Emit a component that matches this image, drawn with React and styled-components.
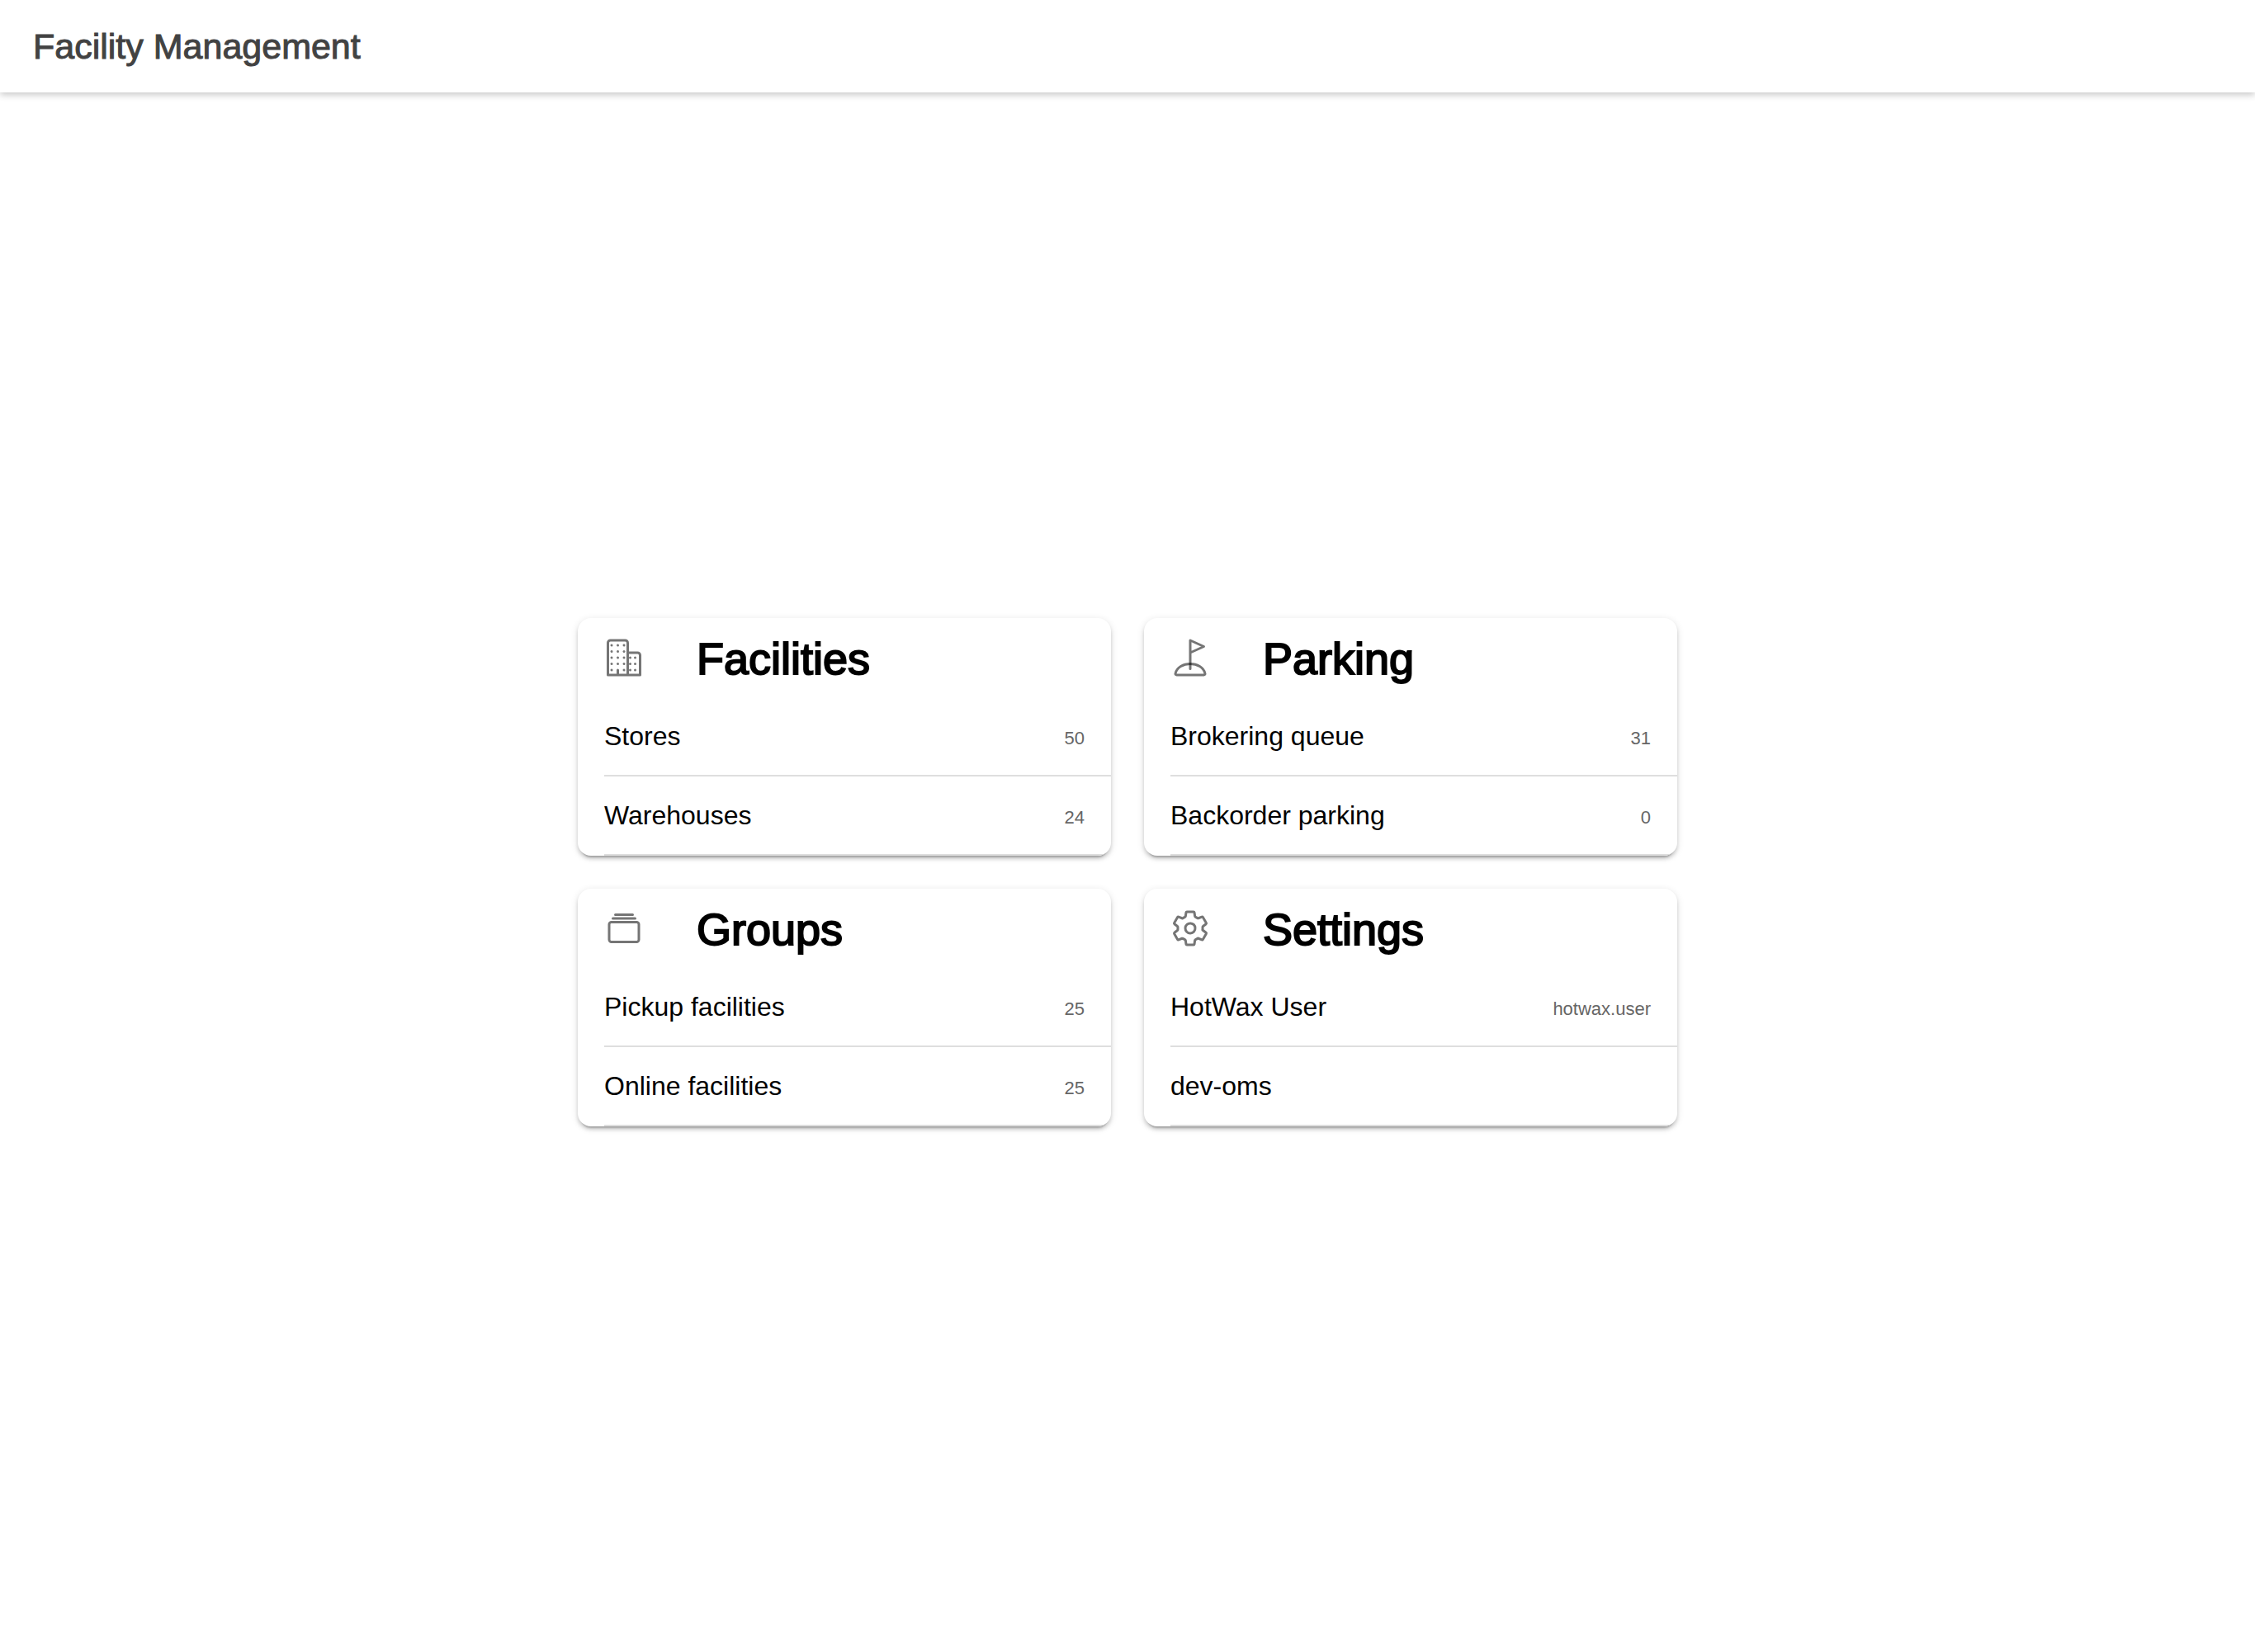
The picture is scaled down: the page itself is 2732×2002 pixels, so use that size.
import React from "react";
import styled, { createGlobalStyle } from "styled-components";
import {
  IoAlbumsOutline,
  IoBusinessOutline,
  IoGolfOutline,
  IoSettingsOutline,
} from "react-icons/io5";

const GlobalStyle = createGlobalStyle`
  *, *::before, *::after { box-sizing: border-box; }
  body {
    margin: 0;
    background: #fff;
    color: #000;
    font-family: "Helvetica Neue", "Liberation Sans", Arial, sans-serif;
  }
`;

const Page = styled.div`
  display: flex;
  flex-direction: column;
  min-height: 100vh;
`;

const Header = styled.header`
  display: flex;
  align-items: center;
  height: 112px;
  padding: 0 40px;
  box-shadow: 0 3px 8px rgba(0, 0, 0, 0.22);
`;

const PageTitle = styled.h1`
  margin: 0;
  font-size: 43px;
  font-weight: 400;
  line-height: 52px;
  color: #424242;
  -webkit-text-stroke: 1px currentColor;
`;

const Content = styled.main`
  flex: 1;
  display: flex;
  align-items: center;
  justify-content: center;
`;

const CardGrid = styled.div`
  display: grid;
  grid-template-columns: repeat(2, minmax(0, 1fr));
  gap: 40px;
  width: 100%;
  max-width: 1332px;
`;

const Card = styled.section`
  overflow: hidden;
  border-radius: 16px;
  background: #fff;
  box-shadow: 0 6px 2px -4px rgba(0, 0, 0, 0.2),
    0 4px 4px rgba(0, 0, 0, 0.14), 0 2px 10px rgba(0, 0, 0, 0.12);
`;

const CardHeader = styled.div`
  display: flex;
  align-items: center;
  gap: 64px;
  height: 96px;
  padding: 0 32px;

  svg {
    flex: none;
    width: 48px;
    height: 48px;
    color: rgba(0, 0, 0, 0.54);
  }
`;

const CardTitle = styled.h2`
  margin: 0;
  padding-top: 2px;
  font-size: 54px;
  font-weight: 400;
  line-height: 64px;
  -webkit-text-stroke: 2px currentColor;
`;

const List = styled.ul`
  margin: 0;
  padding: 0 0 0 32px;
  list-style: none;
`;

const Item = styled.li`
  height: 96px;
  border-bottom: 2px solid #dedede;
`;

const Row = styled.div`
  display: flex;
  align-items: center;
  justify-content: space-between;
  height: 100%;
  padding-right: 32px;
  color: inherit;
  text-decoration: none;
`;

const Label = styled.span`
  font-size: 32px;
  line-height: 40px;
`;

const Note = styled.span`
  padding-top: 6px;
  font-size: 22px;
  line-height: 28px;
  color: #666;
`;

const cards = [
  {
    title: "Facilities",
    icon: IoBusinessOutline,
    rows: [
      { label: "Stores", note: "50", href: "#stores" },
      { label: "Warehouses", note: "24", href: "#warehouses" },
    ],
  },
  {
    title: "Parking",
    icon: IoGolfOutline,
    rows: [
      { label: "Brokering queue", note: "31", href: "#brokering" },
      { label: "Backorder parking", note: "0", href: "#backorder" },
    ],
  },
  {
    title: "Groups",
    icon: IoAlbumsOutline,
    rows: [
      { label: "Pickup facilities", note: "25", href: "#pickup" },
      { label: "Online facilities", note: "25", href: "#online" },
    ],
  },
  {
    title: "Settings",
    icon: IoSettingsOutline,
    rows: [{ label: "HotWax User", note: "hotwax.user" }, { label: "dev-oms" }],
  },
];

export default function App() {
  return (
    <>
      <GlobalStyle />
      <Page>
        <Header>
          <PageTitle>Facility Management</PageTitle>
        </Header>
        <Content>
          <CardGrid>
            {cards.map(({ title, icon: Icon, rows }) => (
              <Card key={title}>
                <CardHeader>
                  <Icon aria-hidden="true" />
                  <CardTitle>{title}</CardTitle>
                </CardHeader>
                <List>
                  {rows.map(({ label, note, href }) => (
                    <Item key={label}>
                      <Row as={href ? "a" : "div"} href={href}>
                        <Label>{label}</Label>
                        {note && <Note>{note}</Note>}
                      </Row>
                    </Item>
                  ))}
                </List>
              </Card>
            ))}
          </CardGrid>
        </Content>
      </Page>
    </>
  );
}
